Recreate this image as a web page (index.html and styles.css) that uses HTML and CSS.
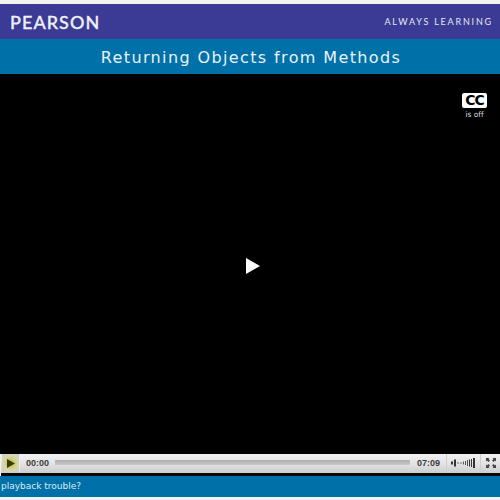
FILE: index.html
```html
<!DOCTYPE html>
<html>
<head>
  <meta charset="UTF-8" />
  <title>Returning Objects from Methods</title>
  <link rel="stylesheet" href="styles.css">
</head>
<body>

  <div class="brand-bar">
    <span class="logo">PEARSON</span>
    <span class="tagline">ALWAYS LEARNING</span>
  </div>

  <div class="title-bar">Returning Objects from Methods</div>

  <div class="video">
    <div class="cc-toggle">
      <span class="cc-badge">CC</span>
      <span class="cc-state">is off</span>
    </div>
    <svg class="big-play" width="14" height="16" viewBox="0 0 14 16">
      <path d="M0 0 L14 8 L0 16 Z" fill="#fff"/>
    </svg>
  </div>

  <div class="controls">
    <div class="play-btn">
      <svg width="8" height="9" viewBox="0 0 8 9">
        <path d="M0 0 L8 4.5 L0 9 Z" fill="#3a3a10"/>
      </svg>
    </div>
    <span class="time time-now">00:00</span>
    <div class="track"></div>
    <span class="time time-end">07:09</span>
    <div class="volume">
      <svg width="25" height="10" viewBox="0 0 25 10">
        <g fill="#333">
          <rect x="0" y="3.5" width="2" height="3"/>
          <rect x="3" y="1.5" width="2" height="7"/>
          <rect x="6" y="4.5" width="2" height="1" fill="#666"/>
          <rect x="9" y="4.5" width="2" height="1" fill="#666"/>
          <rect x="12" y="3.5" width="1" height="3" fill="#555"/>
          <rect x="14" y="3" width="1" height="4" fill="#555"/>
          <rect x="16" y="2" width="1" height="6" fill="#555"/>
          <rect x="18" y="1.5" width="1" height="7"/>
          <rect x="20" y="1" width="1" height="8"/>
          <rect x="22" y="0" width="2" height="10"/>
        </g>
      </svg>
    </div>
    <div class="fullscreen">
      <svg width="10" height="10" viewBox="0 0 10 10">
        <g fill="#444">
          <path d="M0 0 H3.5 L2.5 1 L4 2.5 L2.5 4 L1 2.5 L0 3.5 Z"/>
          <path d="M10 0 V3.5 L9 2.5 L7.5 4 L6 2.5 L7.5 1 L6.5 0 Z"/>
          <path d="M0 10 V6.5 L1 7.5 L2.5 6 L4 7.5 L2.5 9 L3.5 10 Z"/>
          <path d="M10 10 H6.5 L7.5 9 L6 7.5 L7.5 6 L9 7.5 L10 6.5 Z"/>
        </g>
      </svg>
    </div>
  </div>

  <div class="footer-bar">playback trouble?</div>

</body>
</html>
```

FILE: styles.css
```css
html, body {
  height: 100%;
}

body {
  margin: 0;
  padding: 4px 0 3px;
  box-sizing: border-box;
  background: #f4f2ee;
  display: flex;
  flex-direction: column;
  overflow: hidden;
  font-family: "DejaVu Sans", sans-serif;
}

.brand-bar {
  height: 35px;
  background: #3b3b95;
  color: #f0f0f4;
  display: flex;
  align-items: center;
  justify-content: space-between;
  padding: 0 7px 0 10px;
  flex-shrink: 0;
}

.logo {
  font-family: "Lato", sans-serif;
  font-size: 18px;
  letter-spacing: 1.05px;
  font-weight: 500;
  -webkit-text-stroke: 0.3px #f0f0f4;
}

.tagline {
  font-family: "Lato", sans-serif;
  font-size: 9px;
  letter-spacing: 1.8px;
  color: #e6e7f2;
}

.title-bar {
  height: 35px;
  line-height: 37px;
  padding-left: 2px;
  background: #0071a8;
  color: #e8f2f7;
  text-align: center;
  font-size: 16px;
  letter-spacing: 1.38px;
  flex-shrink: 0;
}

.video {
  flex: 1;
  background: #000;
  position: relative;
  display: flex;
  align-items: center;
  justify-content: center;
}

.big-play {
  margin-left: 6px;
  margin-top: 3px;
}

.cc-toggle {
  position: absolute;
  top: 19px;
  right: 13px;
  width: 25px;
  display: flex;
  flex-direction: column;
  align-items: center;
  color: #ddd;
}

.cc-badge {
  width: 25px;
  height: 15px;
  line-height: 15px;
  background: #fff;
  border-radius: 2px;
  color: #000;
  text-align: center;
  font-family: "DejaVu Sans", sans-serif;
  font-weight: bold;
  font-size: 14px;
  letter-spacing: -1px;
}

.cc-state {
  font-family: "DejaVu Sans", sans-serif;
  font-size: 7.5px;
  line-height: 10px;
  margin-top: 2px;
  font-variant-ligatures: none;
}

.controls {
  height: 18px;
  padding-bottom: 1px;
  margin-left: 1px;
  background: linear-gradient(#f2f2f2, #e2e2e2 55%, #cdcdcd);
  border-bottom: 3px solid #0a0a0a;
  display: flex;
  align-items: center;
  flex-shrink: 0;
}

.play-btn {
  width: 17px;
  height: 100%;
  margin-left: 1px;
  border-right: 1px solid #eee;
  background: radial-gradient(circle, #c9c94a 15%, #d8d8b0 60%, #cfcfcf 90%);
  display: flex;
  align-items: center;
  justify-content: center;
}

.time {
  font-family: "Liberation Sans", sans-serif;
  font-size: 9px;
  font-weight: bold;
  color: #3a3a3a;
}

.time-now {
  margin-left: 6px;
}

.time-end {
  margin-right: 6px;
}

.track {
  flex: 1;
  height: 5px;
  margin: 0 7px 1px 6px;
  background: linear-gradient(#aeaeae, #c8c8c8);
  border-radius: 1px;
}

.volume {
  width: 33px;
  height: 100%;
  border-left: 1px solid #cfcfcf;
  display: flex;
  align-items: center;
  justify-content: center;
}

.fullscreen {
  width: 19px;
  height: 100%;
  border-left: 1px solid #cfcfcf;
  display: flex;
  align-items: center;
  justify-content: center;
}

.footer-bar {
  height: 21px;
  line-height: 21px;
  background: #0071a8;
  color: #dcecf4;
  font-size: 9px;
  padding-left: 1px;
  flex-shrink: 0;
}
```
